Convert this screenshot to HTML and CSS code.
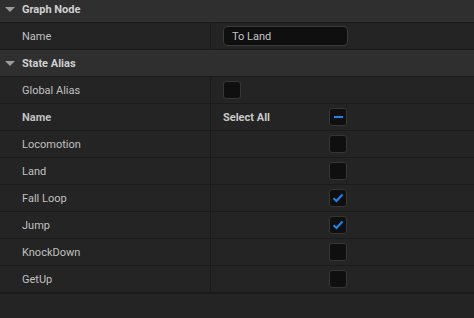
FILE: index.html
```html
<!DOCTYPE html>
<html>
<head>
<meta charset="utf-8">
<link rel="stylesheet" href="styles.css">
</head>
<body>
<div class="panel">
  <div class="section-header">
    <span class="caret"></span><span class="section-title">Graph Node</span>
  </div>
  <div class="row">
    <div class="label">Name</div>
    <div class="value"><div class="textbox">To Land</div></div>
  </div>
  <div class="section-header">
    <span class="caret"></span><span class="section-title">State Alias</span>
  </div>
  <div class="row">
    <div class="label">Global Alias</div>
    <div class="value"><span class="checkbox"></span></div>
  </div>
  <div class="row">
    <div class="label bold">Name</div>
    <div class="value"><span class="select-all bold">Select All</span><span class="checkbox minus"><span class="bar"></span></span></div>
  </div>
  <div class="row">
    <div class="label">Locomotion</div>
    <div class="value indent"><span class="checkbox"></span></div>
  </div>
  <div class="row">
    <div class="label">Land</div>
    <div class="value indent"><span class="checkbox"></span></div>
  </div>
  <div class="row">
    <div class="label">Fall Loop</div>
    <div class="value indent"><span class="checkbox checked"><svg width="12" height="10" viewBox="0 0 12 10"><path d="M1.5 5.2 L4.5 8 L10.5 1.5" fill="none" stroke="#1a84f2" stroke-width="2"/></svg></span></div>
  </div>
  <div class="row">
    <div class="label">Jump</div>
    <div class="value indent"><span class="checkbox checked"><svg width="12" height="10" viewBox="0 0 12 10"><path d="M1.5 5.2 L4.5 8 L10.5 1.5" fill="none" stroke="#1a84f2" stroke-width="2"/></svg></span></div>
  </div>
  <div class="row">
    <div class="label">KnockDown</div>
    <div class="value indent"><span class="checkbox"></span></div>
  </div>
  <div class="row last">
    <div class="label">GetUp</div>
    <div class="value indent"><span class="checkbox"></span></div>
  </div>
</div>
</body>
</html>
```

FILE: styles.css
```css
html, body {
  margin: 0;
  padding: 0;
  background: #242424;
  font-family: Roboto, "Noto Sans", sans-serif;
  font-size: 11px;
  color: #c0c0c0;
}
.panel {
  margin-top: -4px;
  width: 474px;
}
.section-header {
  height: 26px;
  background: #2f2f2f;
  border-bottom: 1px solid #1b1b1b;
  display: flex;
  align-items: center;
  padding-left: 5px;
}
.caret {
  width: 0;
  height: 0;
  border-left: 5px solid transparent;
  border-right: 5px solid transparent;
  border-top: 5px solid #9c9c9c;
  margin-right: 7px;
  margin-top: 1px;
}
.section-title {
  font-weight: bold;
  color: #cfcfcf;
}
.row {
  height: 26px;
  display: flex;
  background: #242424;
  border-bottom: 1px solid #1b1b1b;
}
.row.last {
  border-bottom: 2px solid #1b1b1b;
}
.label {
  width: 188px;
  padding-left: 22px;
  border-right: 1px solid #1b1b1b;
  display: flex;
  align-items: center;
}
.bold {
  font-weight: bold;
}
.value {
  flex: 1;
  display: flex;
  align-items: center;
  padding-left: 12px;
}
.value.indent {
  padding-left: 118px;
}
.select-all {
  width: 106px;
  color: #c8c8c8;
}
.textbox {
  box-sizing: border-box;
  width: 125px;
  height: 20px;
  background: #0f0f0f;
  border: 1px solid #3a3a3a;
  border-radius: 4px;
  padding-left: 8px;
  display: flex;
  align-items: center;
  color: #c4c4c4;
}
.checkbox {
  box-sizing: border-box;
  width: 18px;
  height: 18px;
  background: #0f0f0f;
  border: 1px solid #363636;
  border-radius: 3px;
  display: flex;
  align-items: center;
  justify-content: center;
}
.bar {
  width: 9px;
  height: 2px;
  background: #1a84f2;
}
```
